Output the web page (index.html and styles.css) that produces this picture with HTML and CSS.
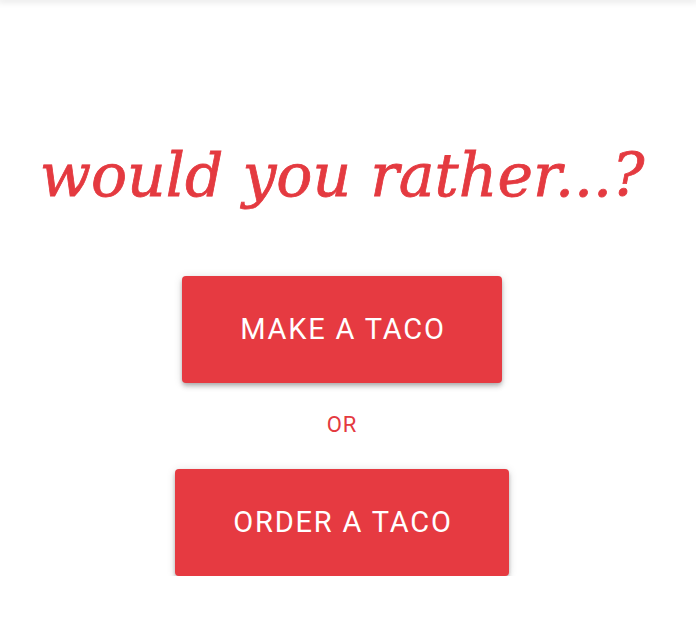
FILE: index.html
```html
<!DOCTYPE html>
<html>
<head>
<meta charset="utf-8">
<link rel="stylesheet" href="styles.css">
</head>
<body>
<div class="topbar"></div>
<main class="page">
  <h1 class="title">would you rather...?</h1>
  <button class="btn btn-make">MAKE A TACO</button>
  <p class="or">OR</p>
  <button class="btn btn-order">ORDER A TACO</button>
</main>
</body>
</html>
```
FILE: styles.css
```css
html, body {
  margin: 0;
  padding: 0;
  background: #ffffff;
}
.topbar {
  height: 0;
  box-shadow: 0 0 6px 2px rgba(0,0,0,0.12);
}
.page {
  display: flex;
  flex-direction: column;
  align-items: center;
  padding-top: 139px;
  padding-right: 12px;
}
.title {
  margin: 0;
  font-family: "DejaVu Serif", Georgia, serif;
  font-style: italic;
  font-weight: normal;
  font-size: 60px;
  line-height: 72px;
  color: #e43a40;
  letter-spacing: 0;
  -webkit-text-stroke: 0.8px #e43a40;
}
.btn {
  margin-top: 65px;
  border: none;
  border-radius: 4px;
  background: #e63a41;
  color: #ffffff;
  font-family: Roboto, "Liberation Sans", sans-serif;
  font-size: 29px;
  letter-spacing: 1.8px;
  line-height: 35px;
  padding: 36px 56px 36px 58px;
  box-shadow: 0 2px 4px -1px rgba(0,0,0,.2), 0 4px 5px 0 rgba(0,0,0,.14), 0 1px 10px 0 rgba(0,0,0,.12);
}
.btn-order {
  margin-top: 0;
}
.or {
  margin: 30px 0 32px;
  font-family: Roboto, "Liberation Sans", sans-serif;
  font-size: 22px;
  letter-spacing: 1px;
  line-height: 24px;
  color: #e43a40;
}
```
